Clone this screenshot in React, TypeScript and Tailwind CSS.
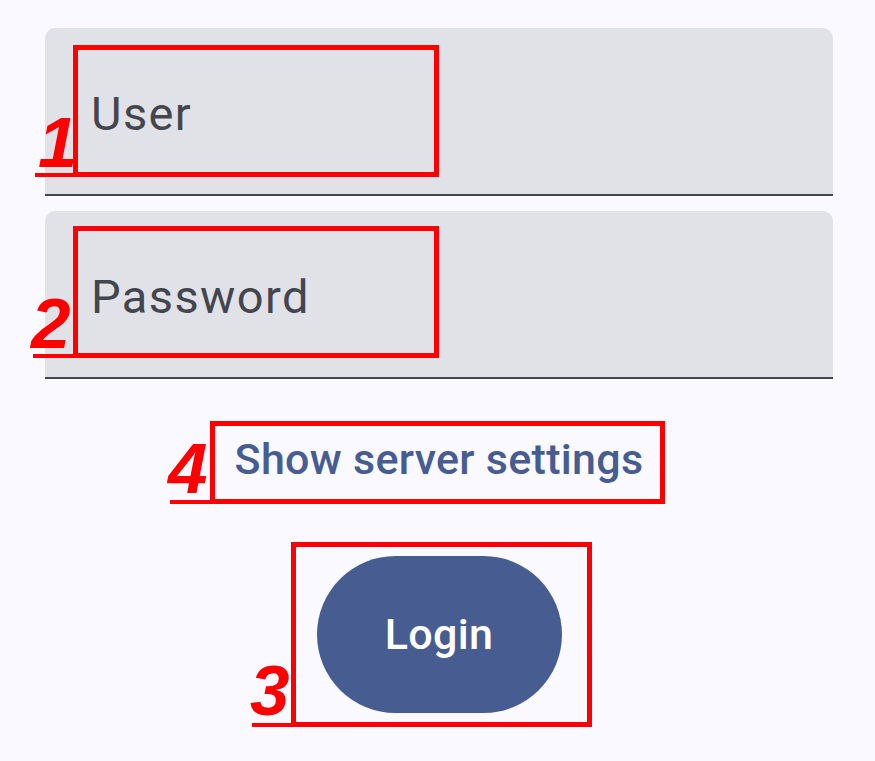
import React from "react";

function Annot({ n, x0, left, top, w, h, dLeft, dTop }: { n: string; x0: number; left: number; top: number; w: number; h: number; dLeft: number; dTop: number }) {
  return (
    <>
      <div
        className="absolute border-[5px] border-[#ff0000] pointer-events-none"
        style={{ left, top, width: w, height: h }}
      />
      <div
        className="absolute bg-[#ff0000] h-[4px] pointer-events-none"
        style={{ left: x0, top: top + h - 4, width: left - x0 + 2 }}
      />
      <div
        className="absolute text-[71px] leading-none font-bold italic text-[#ff0000] pointer-events-none"
        style={{ left: dLeft, top: dTop, fontFamily: '"Liberation Sans", Arial, sans-serif' }}
      >
        {n}
      </div>
    </>
  );
}

function Field({ label }: { label: string }) {
  return (
    <div className="h-[168px] bg-[#e1e2e8] rounded-t-[10px] border-b-[2px] border-[#44464f] flex items-center pl-[46px] pt-[4px]">
      <span className="text-[47px] leading-none tracking-[1.4px] text-[#44464f]" style={{ fontFamily: 'Roboto, sans-serif' }}>
        {label}
      </span>
    </div>
  );
}

export default function App() {
  return (
    <div className="relative w-[875px] h-[761px] bg-[#f9f9ff] overflow-hidden" style={{ fontFamily: 'Roboto, sans-serif' }}>
      <div className="flex flex-col px-[45px] pt-[28px] mr-[-3px]">
        <div className="flex flex-col gap-[15px] w-[788px]">
          <Field label="User" />
          <Field label="Password" />
        </div>
        <div className="flex justify-center w-[788px] mt-[59px]">
          <span className="text-[43px] leading-none tracking-[0.3px] font-medium text-[#475d92]">Show server settings</span>
        </div>
        <div className="flex justify-center w-[788px] mt-[75px]">
          <button className="w-[245px] h-[157px] rounded-full bg-[#475d92] text-white text-[43px] tracking-[0.3px] font-medium leading-none flex items-center justify-center">
            Login
          </button>
        </div>
      </div>
      <Annot n="1" x0={35} left={73} top={45} w={366} h={132} dLeft={38} dTop={107} />
      <Annot n="2" x0={33} left={73} top={226} w={366} h={132} dLeft={31} dTop={288} />
      <Annot n="4" x0={170} left={210} top={421} w={455} h={83} dLeft={168} dTop={433} />
      <Annot n="3" x0={252} left={291} top={542} w={301} h={185} dLeft={250} dTop={655} />
    </div>
  );
}
